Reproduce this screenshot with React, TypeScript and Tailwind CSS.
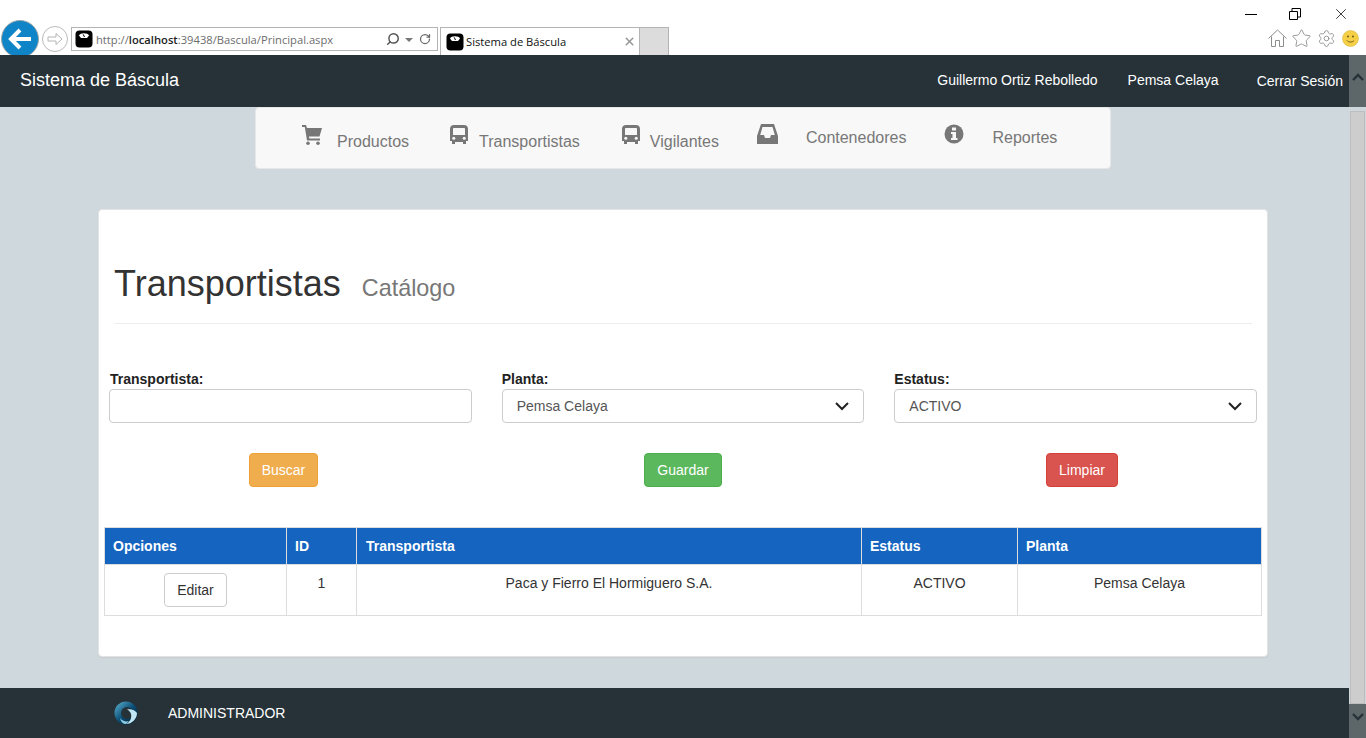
import { RotateCw, Search, Settings, Star, X } from "lucide-react";

const sans = "font-['Liberation_Sans',Arial,sans-serif]";

function ScaleIcon({ size = 18 }: { size?: number }) {
  return (
    <svg width={size} height={size} viewBox="0 0 18 18" className="shrink-0">
      <rect x="0.5" y="0.5" width="17" height="17" rx="4" fill="#000" />
      <path d="M4 5.5C5 2.6 13 2.6 14 5.5L12 8H6Z" fill="#fff" />
      <path d="M9.5 7L8.2 4.4" stroke="#000" strokeWidth="1" />
    </svg>
  );
}

function CartIcon() {
  return (
    <svg width="20" height="20" viewBox="0 0 20 20" fill="#777">
      <path d="M0 0H4L5 3H20L17.5 11.5H7L7.3 13.5H18V15.5H5L2.8 2H0Z" />
      <circle cx="6" cy="18.2" r="1.8" />
      <circle cx="16" cy="18.2" r="1.8" />
    </svg>
  );
}

function BusIcon() {
  return (
    <svg width="18" height="19" viewBox="0 0 18 19" fill="#777">
      <path d="M4 0H14C16.5 0 18 1.5 18 4V16H16V19H13V17H5V19H2V16H0V4C0 1.5 1.5 0 4 0ZM3 4V10H15V4C15 3.4 14.6 3 14 3H4C3.4 3 3 3.4 3 4Z" fillRule="evenodd" />
      <circle cx="3.8" cy="13.3" r="1.5" fill="#f8f8f8" />
      <circle cx="14.2" cy="13.3" r="1.5" fill="#f8f8f8" />
    </svg>
  );
}

function InboxIcon() {
  return (
    <svg width="21" height="20" viewBox="0 0 21 20" fill="#777">
      <path d="M4 0H17L21 12V20H0V12ZM5.5 3L3.2 11H7L8 14H13L14 11H17.8L15.5 3Z" fillRule="evenodd" />
    </svg>
  );
}

function InfoIcon() {
  return (
    <svg width="20" height="20" viewBox="0 0 20 20">
      <circle cx="10" cy="10" r="9.5" fill="#777" />
      <rect x="8" y="3.5" width="4" height="3" fill="#f8f8f8" />
      <path d="M7 8H12V14H13.5V16H7V14H8.5V10H7Z" fill="#f8f8f8" />
    </svg>
  );
}

function Globe() {
  return (
    <svg width="24" height="24" viewBox="0 0 24 24">
      <defs>
        <linearGradient id="g" x1="0" y1="0" x2="1" y2="1">
          <stop offset="0" stopColor="#5fb7d4" />
          <stop offset="0.5" stopColor="#0c4f78" />
          <stop offset="1" stopColor="#04121f" />
        </linearGradient>
      </defs>
      <circle cx="12" cy="12" r="11.5" fill="url(#g)" />
      <circle cx="13" cy="12" r="6" fill="#263238" />
      <path d="M13 8.5C17 7.5 21 9 23 12C23 18 18 23 12 23C16 21 18 17 17 13C16.5 11 15 9.5 13 8.5Z" fill="#bfe6f2" />
      <path d="M6 17C8 20 12 21 15 20L12 23C9 23 7 21 6 17Z" fill="#8fd0e4" />
    </svg>
  );
}

function BrowserChrome() {
  return (
    <div className="relative h-[55px] shrink-0 bg-white font-['Open_Sans',sans-serif]">
      <div className="absolute left-[1px] top-[20px] h-[35px] w-[38px] overflow-hidden">
        <div className="flex h-[38px] w-[38px] items-center justify-center rounded-full border border-[#9aa5ab] bg-[#0f84c6]">
          <svg width="24" height="22" viewBox="0 0 24 22" fill="none" stroke="#fff" strokeWidth="4">
            <path d="M23 11H4M12 2L3 11L12 20" />
          </svg>
        </div>
      </div>
      <div className="absolute left-[42px] top-[26px] flex h-[26px] w-[26px] items-center justify-center rounded-full border border-[#bbb]">
        <svg width="16" height="14" viewBox="0 0 16 14" fill="none" stroke="#b5b5b5">
          <path d="M1 5H9V1.5L15 7L9 12.5V9H1Z" />
        </svg>
      </div>
      <div className="absolute left-[71px] top-[27px] flex h-[24px] w-[367px] items-center border border-[#b4b4b4] pl-[3px] text-[11.2px] text-[#6d6d6d]">
        <ScaleIcon />
        <span className="ml-[3px] mt-[2px]">
          http://<b className="font-semibold text-[#222]">localhost</b>:39438/Bascula/Principal.aspx
        </span>
        <Search size={14} strokeWidth={2.5} className="absolute left-[314px] -scale-x-100 text-[#555]" />
        <svg width="8" height="4" className="absolute left-[333px] top-[10px]"><path d="M0 0H8L4 4Z" fill="#777" /></svg>
        <RotateCw size={12} strokeWidth={2.5} className="absolute left-[347px] text-[#666]" />
      </div>
      <div className="absolute left-[440px] top-[27px] flex h-[28px] w-[200px] items-center border border-b-0 border-[#b4b4b4] pl-[5px] text-[11.2px] text-[#111]">
        <ScaleIcon />
        <span className="ml-[2px] mt-[1px]">Sistema de Báscula</span>
        <X size={13} strokeWidth={3} className="absolute left-[182px] text-[#999]" />
      </div>
      <div className="absolute left-[639px] top-[27px] h-[28px] w-[30px] border border-b-0 border-[#b4b4b4] bg-[#dcdcdc]" />

      <svg width="12" height="2" className="absolute left-[1245px] top-[14px]"><rect width="12" height="1" fill="#000" /></svg>
      <svg width="12" height="12" viewBox="0 0 12 12" fill="none" stroke="#000" className="absolute left-[1289px] top-[8px]">
        <path d="M0.5 3.5H8.5V11.5H0.5ZM3 3V0.5H11.5V9H9" />
      </svg>
      <X size={18} strokeWidth={1} className="absolute left-[1332px] top-[5px] text-black" />
      <svg width="19" height="19" viewBox="0 0 19 19" fill="none" stroke="#8c8c8c" className="absolute left-[1268px] top-[29px]">
        <path d="M0.5 9.5L9.5 1L18.5 9.5M3.5 7.5V17.5H7.5V11.5H11.5V17.5H15.5V7.5" />
      </svg>
      <Star size={21} strokeWidth={1} className="absolute left-[1291px] top-[28px] text-[#8c8c8c]" />
      <Settings size={19} strokeWidth={1.1} className="absolute left-[1317px] top-[29px] text-[#8c8c8c]" />
      <svg width="17" height="17" viewBox="0 0 17 17" className="absolute left-[1342px] top-[30px]">
        <circle cx="8.5" cy="8.5" r="8" fill="#f5cf45" stroke="#d4b84a" strokeWidth="0.6" />
        <circle cx="6" cy="6.5" r="1" fill="#6b5a1c" />
        <circle cx="11" cy="6.5" r="1" fill="#6b5a1c" />
        <path d="M5 10.5C6.5 12.5 10.5 12.5 12 10.5" stroke="#6b5a1c" fill="none" />
      </svg>
    </div>
  );
}

function NavItem({ icon, label, iconWidth, iconTop, textGap, down, ml }: { icon: React.ReactNode; label: string; iconWidth: string; iconTop: string; textGap: string; down: string; ml: string }) {
  return (
    <a className={`flex items-start ${ml}`}>
      <span className={`${iconTop} flex ${iconWidth}`}>{icon}</span>
      <span className={`${textGap} ${down} text-[16px] leading-[20px] text-[#777]`}>{label}</span>
    </a>
  );
}

function Field({ label, inset, children }: { label: string; inset?: string; children: React.ReactNode }) {
  return (
    <div>
      <label className={`block h-[20px] text-[14px] font-bold leading-[20px] text-[#222] ${inset ?? ""}`}>{label}</label>
      {children}
    </div>
  );
}

function SelectBox({ value }: { value: string }) {
  return (
    <div className="flex h-[34px] items-center justify-between rounded-[4px] border border-[#ccc] bg-white pl-[14px] pr-[14px] text-[14px] text-[#555]">
      {value}
      <svg width="14" height="9" viewBox="0 0 14 9" fill="none" stroke="#222" strokeWidth="2">
        <path d="M1 1L7 7L13 1" />
      </svg>
    </div>
  );
}

const cols = ["w-[181px]", "w-[70px]", "w-[505px]", "w-[156px]", "w-[244px]"];
const heads = ["Opciones", "ID", "Transportista", "Estatus", "Planta"];
const headPad = ["pl-[8px]", "pl-[8px]", "pl-[9px]", "pl-[8px]", "pl-[8px]"];

export default function App() {
  return (
    <div className={`flex h-[738px] w-[1366px] flex-col overflow-hidden bg-[#cfd8dc] ${sans}`}>
      <BrowserChrome />
      <div className="flex min-h-0 flex-1">
        <div className="flex w-[1349px] flex-col">
          <header className="flex h-[52px] shrink-0 items-center bg-[#263238] pb-[2px] pl-[20px] text-white">
            <span className="text-[18px]">Sistema de Báscula</span>
            <span className="ml-auto text-[14px]">Guillermo Ortiz Rebolledo</span>
            <span className="ml-[30px] text-[14px]">Pemsa Celaya</span>
            <span className="ml-[38px] mr-[6px] mt-[2px] text-[14px]">Cerrar Sesión</span>
          </header>

          <nav className="ml-[255px] flex h-[62px] w-[856px] shrink-0 rounded-[4px] border border-[#e7e7e7] bg-[#f8f8f8]">
            <NavItem icon={<CartIcon />} label="Productos" iconWidth="w-[22px]" iconTop="mt-[17px]" textGap="ml-[13px]" down="mt-[24px]" ml="ml-[46px]" />
            <NavItem icon={<BusIcon />} label="Transportistas" iconWidth="w-[18px]" iconTop="mt-[17px]" textGap="ml-[11px]" down="mt-[24px]" ml="ml-[41px]" />
            <NavItem icon={<BusIcon />} label="Vigilantes" iconWidth="w-[18px]" iconTop="mt-[17px]" textGap="ml-[10px]" down="mt-[24px]" ml="ml-[42px]" />
            <NavItem icon={<InboxIcon />} label="Contenedores" iconWidth="w-[21px]" iconTop="mt-[16px]" textGap="ml-[28px]" down="mt-[20px]" ml="ml-[38px]" />
            <NavItem icon={<InfoIcon />} label="Reportes" iconWidth="w-[20px]" iconTop="mt-[16px]" textGap="ml-[28px]" down="mt-[20px]" ml="ml-[38px]" />
          </nav>

          <main className="ml-[98px] mt-[40px] h-[448px] w-[1170px] shrink-0 rounded-[4px] border border-[#e3e3e3] bg-white px-[10px] shadow-[0_1px_1px_rgba(0,0,0,0.05)]">
            <div className="mx-[5px] mt-[50px] h-[64px] border-b border-[#eee]">
              <h1 className="text-[36px] leading-[48px] text-[#333]">
                Transportistas
                <small className="ml-[21px] text-[23.4px] text-[#777]">Catálogo</small>
              </h1>
            </div>

            <div className="mt-[45px] grid grid-cols-3 gap-[30px]">
              <Field label="Transportista:" inset="pl-[1px]">
                <div className="h-[34px] rounded-[4px] border border-[#ccc] bg-white" />
              </Field>
              <Field label="Planta:">
                <SelectBox value="Pemsa Celaya" />
              </Field>
              <Field label="Estatus:">
                <SelectBox value="ACTIVO" />
              </Field>
            </div>

            <div className="mt-[30px] flex h-[34px] text-[14px] text-white">
              <button className="ml-[140px] w-[69px] rounded-[4px] border border-[#eea236] bg-[#f0ad4e]">Buscar</button>
              <button className="ml-[326px] w-[78px] rounded-[4px] border border-[#4cae4c] bg-[#5cb85c]">Guardar</button>
              <button className="ml-[324px] w-[72px] rounded-[4px] border border-[#d43f3a] bg-[#d9534f]">Limpiar</button>
            </div>

            <div className="-ml-[5px] mt-[40px] w-[1158px] border border-[#ddd] text-[14px]">
              <div className="flex h-[36px] bg-[#1565c0] font-bold text-white">
                {heads.map((h, i) => (
                  <div key={h} className={`${cols[i]} ${headPad[i]} flex items-center border-l border-[#ddd] first:border-l-0`}>{h}</div>
                ))}
              </div>
              <div className="flex h-[51px] border-t border-[#ddd] text-center text-[#333]">
                <div className={`${cols[0]} flex justify-center pt-[8px]`}>
                  <button className="h-[34px] w-[63px] rounded-[4px] border border-[#ccc] bg-white text-[#333]">Editar</button>
                </div>
                <div className={`${cols[1]} border-l border-[#ddd] pt-[8px]`}>1</div>
                <div className={`${cols[2]} border-l border-[#ddd] pt-[8px]`}>Paca y Fierro El Hormiguero S.A.</div>
                <div className={`${cols[3]} border-l border-[#ddd] pt-[8px]`}>ACTIVO</div>
                <div className={`${cols[4]} border-l border-[#ddd] pt-[8px]`}>Pemsa Celaya</div>
              </div>
            </div>
          </main>

          <footer className="mt-[31px] flex h-[50px] shrink-0 items-center bg-[#263238] pl-[114px] text-[14px] text-white">
            <Globe />
            <span className="ml-[30px]">ADMINISTRADOR</span>
          </footer>
        </div>

        <div className="flex w-[17px] flex-col">
          <div className="flex h-[52px] justify-center bg-[#5d6669] pt-[18px]">
            <svg width="12" height="8" viewBox="0 0 12 8" fill="none" stroke="#263238" strokeWidth="2.4">
              <path d="M1 7L6 2L11 7" />
            </svg>
          </div>
          <div className="mx-[1px] mt-[4px] flex-1 border border-[#bdbdbd] bg-[#cdcdcd]" />
          <div className="flex h-[34px] justify-center bg-[#5d6669] pt-[9px]">
            <svg width="12" height="8" viewBox="0 0 12 8" fill="none" stroke="#263238" strokeWidth="2.4">
              <path d="M1 1L6 6L11 1" />
            </svg>
          </div>
        </div>
      </div>
    </div>
  );
}
